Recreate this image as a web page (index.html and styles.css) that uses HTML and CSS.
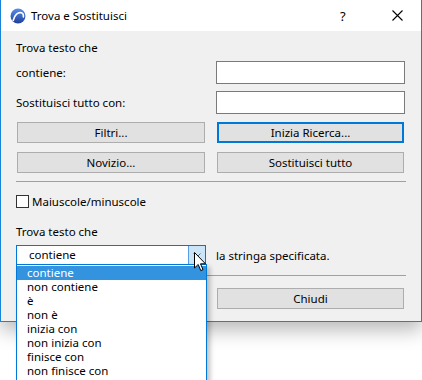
FILE: index.html
```html
<!DOCTYPE html>
<html lang="it">
<head>
    <meta charset="UTF-8">
    <title>Trova e Sostituisci</title>
    <link rel="stylesheet" href="styles.css">
</head>
<body>
    <div class="window">
        <div class="titlebar">
            <svg class="logo" width="16" height="16" viewBox="0 0 16 16">
                <defs>
                    <linearGradient id="lg" x1="0" y1="0" x2="0" y2="1">
                        <stop offset="0" stop-color="#5b8ee8"/>
                        <stop offset="1" stop-color="#1d3f9e"/>
                    </linearGradient>
                </defs>
                <circle cx="8" cy="8" r="7.5" fill="url(#lg)"/>
                <path d="M3.2 12.5 C4.5 7 8 3.8 11.5 4.8 C13 5.3 13.6 7 13.4 9" fill="none" stroke="#fff" stroke-width="1.6" stroke-linecap="round"/>
            </svg>
            <span class="title">Trova e Sostituisci</span>
            <span class="help">?</span>
            <svg class="close" width="11" height="11" viewBox="0 0 11 11">
                <path d="M0.5 0.5 L10.5 10.5 M10.5 0.5 L0.5 10.5" stroke="#000" stroke-width="1.1"/>
            </svg>
        </div>

        <div class="content">
            <div class="label first">Trova testo che</div>

            <div class="row input-row">
                <span>contiene:</span>
                <input class="field" type="text">
            </div>
            <div class="row input-row second">
                <span>Sostituisci tutto con:</span>
                <input class="field" type="text">
            </div>

            <div class="row btn-row">
                <button class="btn">Filtri...</button>
                <button class="btn default">Inizia Ricerca...</button>
            </div>
            <div class="row btn-row second">
                <button class="btn">Novizio...</button>
                <button class="btn">Sostituisci tutto</button>
            </div>

            <div class="sep"></div>

            <label class="check">
                <span class="box"></span>
                <span>Maiuscole/minuscole</span>
            </label>

            <div class="label find">Trova testo che</div>

            <div class="row combo-row">
                <div class="combo">
                    <span class="combo-text">contiene</span>
                    <span class="combo-arrow">
                        <svg width="8" height="5" viewBox="0 0 8 5"><path d="M0.5 0.5 L4 4 L7.5 0.5" fill="none" stroke="#6d6d6d" stroke-width="1"/></svg>
                    </span>
                </div>
                <span>la stringa specificata.</span>
            </div>

            <div class="sep lower"></div>

            <div class="row btn-row close-row">
                <span></span>
                <button class="btn">Chiudi</button>
            </div>
        </div>

        <ul class="dropdown">
            <li class="selected">contiene</li>
            <li>non contiene</li>
            <li>è</li>
            <li>non è</li>
            <li>inizia con</li>
            <li>non inizia con</li>
            <li>finisce con</li>
            <li>non finisce con</li>
        </ul>

        <svg class="cursor" width="13" height="20" viewBox="0 0 13 20">
            <path d="M0.5 0.5 L0.5 16 L4.2 12.5 L6.8 18.6 L9 17.6 L6.5 11.8 L11.5 11.8 Z" fill="#fff" stroke="#000" stroke-width="1" stroke-linejoin="miter"/>
        </svg>
    </div>
</body>
</html>
```

FILE: styles.css
```css
html, body {
    height: 380px;
}

body {
    margin: 0;
    background: #fff;
    font-family: "Noto Sans", "Segoe UI", sans-serif;
    font-size: 11.5px;
    color: #000;
}

.window {
    position: relative;
    width: 422px;
    height: 322px;
    box-sizing: border-box;
    background: #f0f0f0;
    border: 1px solid #1883d7;
    border-top: none;
    box-shadow: 0 8px 18px rgba(0,0,0,0.28);
}

.titlebar {
    height: 31px;
    background: #fff;
    display: flex;
    align-items: center;
    padding-left: 9px;
}

.logo {
    margin-right: 5px;
    margin-top: 1px;
}

.title {
    flex: 1;
}

.help {
    width: 12px;
    margin-right: 40px;
    font-size: 13px;
}

.close {
    margin-right: 18px;
}

.content {
    padding: 10px 15px 0 15px;
}

.label {
    height: 14px;
    line-height: 14px;
}

.row {
    display: grid;
    grid-template-columns: 190px 189px;
    column-gap: 10px;
    align-items: center;
}

.input-row {
    margin-top: 6px;
}

.input-row.second {
    margin-top: 7px;
}

.field {
    height: 23px;
    box-sizing: border-box;
    margin: 0;
    border: 1px solid #7a7a7a;
    background: #fff;
    width: 189px;
    padding: 0 3px;
    font: inherit;
}

.btn-row {
    margin-top: 8px;
}

.btn-row.second {
    margin-top: 9px;
}

.btn {
    height: 21px;
    margin: 0 1px;
    box-sizing: border-box;
    background: #e1e1e1;
    border: 1px solid #adadad;
    font: inherit;
    color: #000;
    padding: 0;
}

.btn.default {
    border: 2px solid #0078d7;
}

.sep {
    height: 1px;
    background: #a0a0a0;
    margin-top: 8px;
}

.sep.lower {
    margin-top: 10px;
}

.check {
    display: flex;
    align-items: center;
    gap: 3px;
    margin-top: 13px;
    height: 13px;
}

.box {
    width: 13px;
    height: 13px;
    box-sizing: border-box;
    border: 1px solid #333;
    background: #fff;
}

.label.find {
    margin-top: 17px;
}

.combo-row {
    margin-top: 6px;
}

.combo {
    height: 20px;
    box-sizing: border-box;
    border: 1px solid #0078d7;
    background: #fff;
    display: flex;
    align-items: stretch;
}

.combo-text {
    flex: 1;
    padding-left: 12px;
    line-height: 18px;
}

.combo-arrow {
    width: 16px;
    background: #cce4f7;
    border-left: 1px solid #569de5;
    display: flex;
    align-items: center;
    justify-content: center;
}

.close-row {
    margin-top: 12px;
}

.dropdown {
    position: absolute;
    left: 15px;
    top: 264px;
    width: 191px;
    margin: 0;
    padding: 1px 0 0 0;
    list-style: none;
    background: #fff;
    border: 1px solid #0078d7;
    box-sizing: border-box;
    height: 118px;
    box-shadow: 3px 3px 5px rgba(0,0,0,0.25);
}

.dropdown li {
    height: 14px;
    line-height: 14px;
    padding-left: 10px;
}

.dropdown li.selected {
    background: #3393df;
    color: #fff;
}

.cursor {
    position: absolute;
    left: 193px;
    top: 252px;
}
```
